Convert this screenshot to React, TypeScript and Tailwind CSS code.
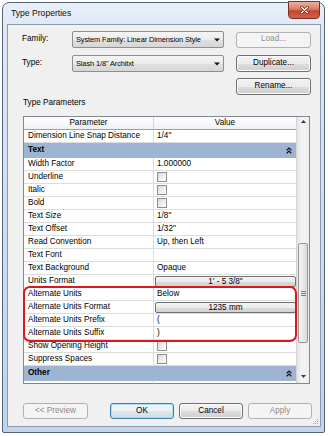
import React from "react";

type Row =
  | { kind: "text"; name: string; value: string }
  | { kind: "check"; name: string }
  | { kind: "button"; name: string; value: string }
  | { kind: "group"; name: string };

const rows: Row[] = [
  { kind: "text", name: "Dimension Line Snap Distance", value: "1/4\"" },
  { kind: "group", name: "Text" },
  { kind: "text", name: "Width Factor", value: "1.000000" },
  { kind: "check", name: "Underline" },
  { kind: "check", name: "Italic" },
  { kind: "check", name: "Bold" },
  { kind: "text", name: "Text Size", value: "1/8\"" },
  { kind: "text", name: "Text Offset", value: "1/32\"" },
  { kind: "text", name: "Read Convention", value: "Up, then Left" },
  { kind: "text", name: "Text Font", value: "" },
  { kind: "text", name: "Text Background", value: "Opaque" },
  { kind: "button", name: "Units Format", value: "1' - 5 3/8\"" },
  { kind: "text", name: "Alternate Units", value: "Below" },
  { kind: "button", name: "Alternate Units Format", value: "1235 mm" },
  { kind: "text", name: "Alternate Units Prefix", value: "(" },
  { kind: "text", name: "Alternate Units Suffix", value: ")" },
  { kind: "check", name: "Show Opening Height" },
  { kind: "check", name: "Suppress Spaces" },
  { kind: "group", name: "Other" },
  { kind: "text", name: "", value: "" },
];

const btn =
  "flex items-center justify-center rounded-[3px] border border-[#707070] bg-[linear-gradient(to_bottom,#f2f2f2_0%,#ebebeb_50%,#dddddd_51%,#cfcfcf_100%)] shadow-[inset_0_0_0_1px_#fbfbfb]";
const btnOff =
  "flex items-center justify-center rounded-[3px] border border-[#adb2b5] bg-[#f4f4f4] text-[#8d8d8d]";

const Combo = ({ text }: { text: string }) => (
  <div className="flex h-full w-[152px] items-center justify-between rounded-[2px] border border-[#8e8f8f] bg-[linear-gradient(to_bottom,#f4f4f4_0%,#ececec_50%,#e0e0e0_51%,#d6d6d6_100%)] pl-[3px] pr-[3px]">
    <span className="min-w-0 overflow-hidden whitespace-nowrap text-[7.4px] tracking-[-0.1px]">{text}</span>
    <svg className="shrink-0" width="6" height="4" viewBox="0 0 6 4">
      <path d="M0 0.5h6L3 3.5z" fill="#111" />
    </svg>
  </div>
);

const Check = () => (
  <div className="h-[10px] w-[10px] border border-[#8e8f8f] bg-[linear-gradient(135deg,#d6d6d6_0%,#f2f2f2_60%,#ffffff_100%)]" />
);

const Chevrons = () => (
  <svg width="6" height="7" viewBox="0 0 6 7">
    <path d="M0.7 3.2L3 1L5.3 3.2M0.7 6.2L3 4L5.3 6.2" stroke="#111" strokeWidth="1.2" fill="none" />
  </svg>
);

const TableRow = ({ row }: { row: Row }) => {
  if (row.kind === "group") {
    return (
      <div className="flex h-[15px] shrink-0 items-center justify-between bg-[#9db5d3] pl-[4px] pr-[4px] font-bold">
        <span>{row.name}</span>
        <Chevrons />
      </div>
    );
  }
  return (
    <div className="flex h-[13px] shrink-0 border-b border-[#dcdcdc]">
      <div className="w-[130px] overflow-hidden whitespace-nowrap border-r border-[#dcdcdc] pl-[4px] leading-[12px]">
        {row.name}
      </div>
      {row.kind === "text" && <div className="flex-1 pl-[3px] leading-[12px] text-black">{row.value}</div>}
      {row.kind === "check" && (
        <div className="flex flex-1 items-center pl-[3px]">
          <Check />
        </div>
      )}
      {row.kind === "button" && (
        <div className="flex flex-1 items-center pl-[1px]">
          <div className="flex h-[11px] w-full items-center justify-center rounded-[2px] border border-[#707070] bg-[linear-gradient(to_bottom,#f4f4f4_0%,#ebebeb_50%,#dddddd_51%,#d2d2d2_100%)] leading-[9px]">
            {row.value}
          </div>
        </div>
      )}
    </div>
  );
};

const Scrollbar = () => (
  <div className="flex w-[13px] flex-col border-l border-[#d4d4d4] bg-[linear-gradient(to_right,#e6e6e6_0%,#f3f3f3_40%,#f0f0f0_100%)]">
    <div className="flex h-[13px] shrink-0 justify-center pt-[3px]">
      <svg width="5" height="3" viewBox="0 0 5 3">
        <path d="M0 3L2.5 0L5 3z" fill="#3a3a3a" />
      </svg>
    </div>
    <div className="flex-1">
      <div className="mx-[1px] mt-[113px] flex h-[100px] flex-col items-center justify-center gap-[1px] rounded-[2px] border border-[#979797] bg-[linear-gradient(to_right,#f4f4f4_0%,#e9e9e9_50%,#d9d9d9_100%)]">
        <div className="h-px w-[5px] bg-[#7a7a7a]" />
        <div className="h-px w-[5px] bg-[#7a7a7a]" />
        <div className="h-px w-[5px] bg-[#7a7a7a]" />
      </div>
    </div>
    <div className="flex h-[13px] shrink-0 items-center justify-center">
      <svg width="5" height="3" viewBox="0 0 5 3">
        <path d="M0 0L2.5 3L5 0z" fill="#3a3a3a" />
      </svg>
    </div>
  </div>
);

export default function App() {
  return (
    <div className="h-[436px] w-[328px] bg-white pl-[2px] pt-[2px] font-['Liberation_Sans',Arial,sans-serif] text-[8.2px] text-black">
      <div className="relative flex h-[431px] w-[323px] flex-col rounded-t-[7px] rounded-b-[2px] border border-[#52637a] bg-[linear-gradient(to_bottom,#e8eff8_0px,#dfe9f5_24px,#d0deef_200px,#c2d4e9_100%)] pb-[5px] pl-[4px] pr-[3px]">
        {/* title bar */}
        <div className="flex h-[21px] shrink-0 items-center pl-[4px] text-[8.6px] text-[#111]">Type Properties</div>
        <div className="absolute right-[4px] top-[-2px] flex h-[18px] w-[32px] items-center justify-center rounded-b-[4px] border border-[#7b2f24] bg-[linear-gradient(to_bottom,#eab3a5_0%,#d97a66_45%,#c5462f_55%,#d0604a_100%)]">
          <svg width="9" height="8" viewBox="0 0 9 8">
            <path d="M1.5 1.2L7.5 6.8M7.5 1.2L1.5 6.8" stroke="#5a1f16" strokeWidth="2.6" strokeLinecap="round" />
            <path d="M1.5 1.2L7.5 6.8M7.5 1.2L1.5 6.8" stroke="#ffffff" strokeWidth="1.5" strokeLinecap="round" />
          </svg>
        </div>

        {/* client area */}
        <div className="relative flex flex-1 flex-col border border-[#8c9aab] bg-[#f0f0f0]">
          <div className="mt-[6px] flex h-[17px] items-center pl-[14px]">
            <span className="w-[50px]">Family:</span>
            <Combo text="System Family: Linear Dimension Style" />
            <div className={`${btnOff} ml-[12px] h-[16px] w-[75px]`}>Load...</div>
          </div>
          <div className="mt-[7px] flex h-[17px] items-center pl-[14px]">
            <span className="w-[50px]">Type:</span>
            <Combo text="Slash 1/8&quot; Architxt" />
            <div className={`${btn} ml-[12px] h-[17px] w-[75px]`}>Duplicate...</div>
          </div>
          <div className="mt-[6px] flex h-[17px] items-center pl-[228px]">
            <div className={`${btn} h-[17px] w-[75px]`}>Rename...</div>
          </div>

          <div className="mt-[2px] pl-[15px] leading-[12px]">Type Parameters</div>

          <div className="relative ml-[15px] mt-[7px] flex h-[268px] w-[287px] border border-[#828790] bg-white">
            <div className="flex w-[272px] flex-col overflow-hidden">
              <div className="flex h-[13px] shrink-0 border-b border-[#a0a0a0] bg-[linear-gradient(to_bottom,#ffffff_0%,#f7f8fa_50%,#eef0f3_100%)]">
                <div className="w-[130px] border-r border-[#d5d5d5] text-center leading-[12px]">Parameter</div>
                <div className="flex-1 text-center leading-[12px]">Value</div>
              </div>
              {rows.map((r, i) => (
                <TableRow key={i} row={r} />
              ))}
            </div>
            <Scrollbar />
            <div className="pointer-events-none absolute left-[-1px] top-[169px] h-[56px] w-[274px] rounded-[7px] border-2 border-[#e0161e]" />
          </div>

          <div className="mt-[19px] flex h-[16px] pl-[15px]">
            <div className={`${btnOff} h-[16px] w-[65px]`}>&lt;&lt; Preview</div>
            <div className="ml-[22px] flex h-[16px] w-[64px] items-center justify-center rounded-[3px] border border-[#3c7fb1] bg-[linear-gradient(to_bottom,#f2f6f9_0%,#eaf0f4_50%,#dce6ee_51%,#d2dde6_100%)] shadow-[inset_0_0_0_1px_#a9dcf6]">
              OK
            </div>
            <div className={`${btn} ml-[5px] h-[16px] w-[64px]`}>Cancel</div>
            <div className={`${btnOff} ml-[5px] h-[16px] w-[64px]`}>Apply</div>
          </div>

          <svg className="absolute bottom-[1px] right-[1px]" width="6" height="6" viewBox="0 0 6 6">
            <rect x="4" y="0" width="1" height="1" fill="#a0a0a0" />
            <rect x="2" y="2" width="1" height="1" fill="#a0a0a0" />
            <rect x="4" y="2" width="1" height="1" fill="#a0a0a0" />
            <rect x="0" y="4" width="1" height="1" fill="#a0a0a0" />
            <rect x="2" y="4" width="1" height="1" fill="#a0a0a0" />
            <rect x="4" y="4" width="1" height="1" fill="#a0a0a0" />
          </svg>
        </div>
      </div>
    </div>
  );
}
